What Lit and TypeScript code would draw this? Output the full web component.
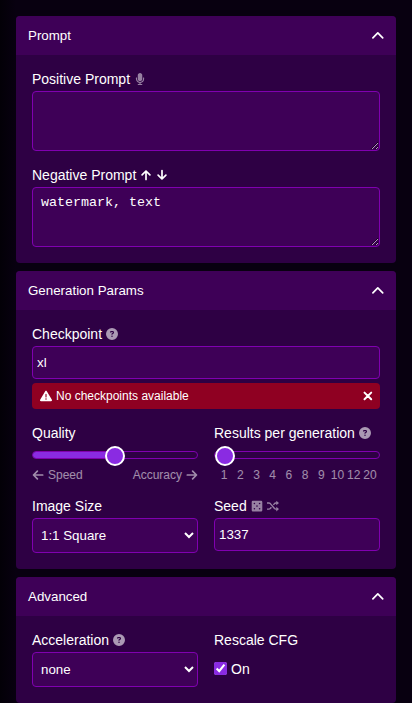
import { LitElement, html, css, svg } from "lit";
import { customElement, property } from "lit/decorators.js";

const QUESTION =
  "M256 512A256 256 0 1 0 256 0a256 256 0 1 0 0 512zM169.8 165.3c7.9-22.3 29.1-37.3 52.8-37.3h58.3c34.9 0 63.1 28.3 63.1 63.1c0 22.6-12.1 43.5-31.7 54.8L280 264.4c-.2 13-10.9 23.6-24 23.6c-13.3 0-24-10.7-24-24V250.5c0-8.6 4.6-16.5 12.1-20.8l44.3-25.4c4.7-2.7 7.6-7.7 7.6-13.1c0-8.4-6.8-15.1-15.1-15.1H222.6c-3.4 0-6.4 2.1-7.5 5.3l-.4 1.2c-4.4 12.5-18.2 19-30.6 14.6s-19-18.2-14.6-30.6l.4-1.2zM224 352a32 32 0 1 1 64 0 32 32 0 1 1 -64 0z";
const MIC =
  "M176 352c53.02 0 96-42.98 96-96V96c0-53.02-42.98-96-96-96S80 42.98 80 96v160c0 53.02 42.98 96 96 96zm160-160h-16c-8.84 0-16 7.16-16 16v48c0 74.8-64.49 134.82-140.79 127.38C96.71 376.89 48 317.11 48 250.3V208c0-8.84-7.16-16-16-16H16c-8.84 0-16 7.16-16 16v40.16c0 89.64 63.97 169.55 152 181.69V464H96c-8.84 0-16 7.16-16 16v16c0 8.84 7.16 16 16 16h160c8.84 0 16-7.16 16-16v-16c0-8.84-7.16-16-16-16h-56v-33.77C285.71 418.47 352 344.9 352 256v-48c0-8.84-7.16-16-16-16z";
const WARNING =
  "M256 32c14.2 0 27.3 7.5 34.5 19.8l216 368c7.3 12.4 7.3 27.7 .2 40.1S486.3 480 472 480H40c-14.3 0-27.6-7.7-34.7-20.1s-7-27.8 .2-40.1l216-368C228.7 39.5 241.8 32 256 32zm0 128c-13.3 0-24 10.7-24 24V296c0 13.3 10.7 24 24 24s24-10.7 24-24V184c0-13.3-10.7-24-24-24zm32 224a32 32 0 1 0 -64 0 32 32 0 1 0 64 0z";

// Every icon is drawn in a 12x12 box.
const ICONS: Record<string, unknown> = {
  help: svg`<path transform="scale(.0234375)" d=${QUESTION}/>`,
  mic: svg`<path transform="translate(1.9 0) scale(.0234375)" d=${MIC}/>`,
  warning: svg`<path transform="scale(.0234375)" d=${WARNING}/>`,
  up: svg`<path class="line" d="M6 10.4V2.2M2.1 5.8L6 2l3.9 3.8"/>`,
  down: svg`<path class="line" d="M6 1.6v8.2M2.1 6.2L6 10l3.9-3.8"/>`,
  left: svg`<path class="line" d="M10.7 6H1.7M5.4 2.1L1.5 6l3.9 3.9"/>`,
  right: svg`<path class="line" d="M1.3 6h9M6.6 2.1L10.5 6l-3.9 3.9"/>`,
  close: svg`<path class="line heavy" d="M2.5 2.6l6.7 6.7M9.2 2.6L2.5 9.3"/>`,
  chevron: svg`<path class="line" d="M.9 7.8L5.8 2.9l4.9 4.9"/>`,
  dice: svg`<path fill-rule="evenodd" d="M1.9.8h8.2a1.2 1.2 0 0 1 1.2 1.2v8.2a1.2 1.2 0 0 1-1.2 1.2H1.9A1.2 1.2 0 0 1 .7 10.2V2A1.2 1.2 0 0 1 1.9.8zM2.6 3.5a.8.8 0 1 0 1.6 0a.8.8 0 1 0-1.6 0zM7.8 3.5a.8.8 0 1 0 1.6 0a.8.8 0 1 0-1.6 0zM5.2 6.1a.8.8 0 1 0 1.6 0a.8.8 0 1 0-1.6 0zM2.6 8.7a.8.8 0 1 0 1.6 0a.8.8 0 1 0-1.6 0zM7.8 8.7a.8.8 0 1 0 1.6 0a.8.8 0 1 0-1.6 0z"/>`,
  shuffle: svg`<path class="line thin" d="M0 3h1.9c.6 0 1 .2 1.4.6l4.2 4.9c.4.4.8.6 1.4.6H10M0 9.1h1.9c.6 0 1-.2 1.4-.6l1.1-1.3M6.4 4.9l1.1-1.3c.4-.4.8-.6 1.4-.6H10"/><path d="M9.3.7L12 3 9.3 5.3zM9.3 6.8L12 9.1l-2.7 2.3z"/>`,
};

@customElement("ui-icon")
class UiIcon extends LitElement {
  @property() name = "help";
  static styles = css`
    :host { display: block; width: 12px; height: 12px; flex: none; }
    svg { display: block; fill: currentColor; }
    .line { fill: none; stroke: currentColor; stroke-width: 1.7; stroke-linecap: round; stroke-linejoin: round; }
    .heavy { stroke-width: 2; }
    .thin { stroke-width: 1.45; stroke-linecap: butt; }
  `;
  render() {
    return html`<svg width="12" height="12" viewBox="0 0 12 12">${ICONS[this.name]}</svg>`;
  }
}

@customElement("ui-panel")
class UiPanel extends LitElement {
  @property() heading = "";
  static styles = css`
    :host { display: block; border-radius: 4px; overflow: hidden; background: #2e0044; }
    .head {
      display: flex; justify-content: space-between; align-items: center;
      width: 100%; height: 39px; padding: 0 12px; border: 0; box-sizing: border-box;
      background: #3e0057; color: #fff; font: 13.333px/15px "Liberation Sans", Arial, sans-serif;
    }
    .body { display: flex; flex-direction: column; gap: 16px; padding: 16px; }
  `;
  render() {
    return html`<button class="head">${this.heading}<ui-icon name="chevron"></ui-icon></button>
      <div class="body"><slot></slot></div>`;
  }
}

@customElement("ui-slider")
class UiSlider extends LitElement {
  @property({ type: Number }) value = 0;
  static styles = css`
    :host { display: block; position: relative; height: 20px; padding-top: 2px; box-sizing: border-box; }
    .track {
      margin-top: 4px; height: 8px; box-sizing: border-box; border: 1px solid #8000b0;
      border-radius: 4px; overflow: hidden;
    }
    .fill { height: 100%; background: #8a2be2; }
    .rail { position: absolute; left: 11px; right: 11px; top: 1px; height: 20px; }
    .thumb {
      position: absolute; top: 0; width: 20px; height: 20px; margin-left: -10px; box-sizing: border-box;
      border: 2px solid #fff; border-radius: 50%; background: #8a2be2;
    }
  `;
  render() {
    return html`<div class="track"><div class="fill" style="width:${this.value}%"></div></div>
      <div class="rail"><div class="thumb" style="left:${this.value}%"></div></div>`;
  }
}

@customElement("app-root")
class AppRoot extends LitElement {
  static styles = css`
    :host {
      display: flex; flex-direction: column; gap: 8px; box-sizing: border-box;
      height: 703px; overflow: hidden; padding: 16px 16px 0; color: #fff;
      background: linear-gradient(90deg, #030007, #080010 16px);
      font: 14px/16px "Liberation Sans", Arial, sans-serif;
    }
    ui-panel { flex: none; }
    .label { display: flex; align-items: center; gap: 4px; height: 16px; margin-bottom: 4px; white-space: nowrap; }
    .dim { opacity: 0.6; }
    .faint { opacity: 0.5; }
    .grid { display: grid; grid-template-columns: 1fr 1fr; gap: 16px; }
    textarea, input.text, select {
      display: block; width: 100%; margin: 0; box-sizing: border-box; color: #fff;
      background: #3e0057; border: 1px solid #8000b0; border-radius: 4px; outline: none;
    }
    textarea { height: 60px; padding: 7px 8px; font: 13.333px/15px "Liberation Mono", monospace; }
    input.text { height: 33px; padding: 0 4px; font: 13.333px "Liberation Sans", Arial, sans-serif; }
    select { height: 35px; padding: 8px 4px; font: 13.333px "Liberation Sans", Arial, sans-serif; }
    .error {
      display: flex; align-items: center; gap: 4px; height: 26px; margin-top: 4px; padding: 0 6px 0 8px;
      box-sizing: border-box; border-radius: 4px; background: #8f0022; font-size: 12px;
    }
    .error .msg { flex: 1; }
    .legend {
      display: flex; justify-content: space-between; align-items: flex-end;
      height: 17px; opacity: 0.55; font-size: 12px; line-height: 14px;
    }
    .legend .side { display: flex; align-items: center; gap: 4px; }
    .ticks { padding: 0 2px; }
    .tick { width: 0; flex: 1; display: flex; justify-content: center; }
    .check { display: flex; align-items: center; gap: 4px; height: 33px; }
    .check input { margin: 0; width: 13px; height: 13px; accent-color: #8a2be2; }
  `;
  render() {
    const help = html`<ui-icon class="dim" name="help"></ui-icon>`;
    return html`
      <ui-panel heading="Prompt">
        <div>
          <div class="label">Positive Prompt <ui-icon class="faint" name="mic"></ui-icon></div>
          <textarea></textarea>
        </div>
        <div>
          <div class="label">Negative Prompt <ui-icon name="up"></ui-icon><ui-icon name="down"></ui-icon></div>
          <textarea .value=${"watermark, text"}></textarea>
        </div>
      </ui-panel>
      <ui-panel heading="Generation Params">
        <div>
          <div class="label">Checkpoint ${help}</div>
          <input class="text" .value=${"xl"} />
          <div class="error">
            <ui-icon name="warning"></ui-icon><span class="msg">No checkpoints available</span><ui-icon name="close"></ui-icon>
          </div>
        </div>
        <div class="grid">
          <div>
            <div class="label">Quality</div>
            <ui-slider .value=${50}></ui-slider>
            <div class="legend">
              <span class="side"><ui-icon name="left"></ui-icon>Speed</span>
              <span class="side">Accuracy<ui-icon name="right"></ui-icon></span>
            </div>
          </div>
          <div>
            <div class="label">Results per generation ${help}</div>
            <ui-slider .value=${0}></ui-slider>
            <div class="legend ticks">
              ${[1, 2, 3, 4, 6, 8, 9, 10, 12, 20].map((n) => html`<span class="tick">${n}</span>`)}
            </div>
          </div>
          <div>
            <div class="label">Image Size</div>
            <select><option>1:1 Square</option></select>
          </div>
          <div>
            <div class="label">Seed <ui-icon class="faint" name="dice"></ui-icon><ui-icon class="faint" name="shuffle"></ui-icon></div>
            <input class="text" .value=${"1337"} />
          </div>
        </div>
      </ui-panel>
      <ui-panel heading="Advanced">
        <div class="grid">
          <div>
            <div class="label">Acceleration ${help}</div>
            <select><option>none</option></select>
          </div>
          <div>
            <div class="label">Rescale CFG</div>
            <label class="check"><input type="checkbox" checked />On</label>
          </div>
        </div>
      </ui-panel>
    `;
  }
}
